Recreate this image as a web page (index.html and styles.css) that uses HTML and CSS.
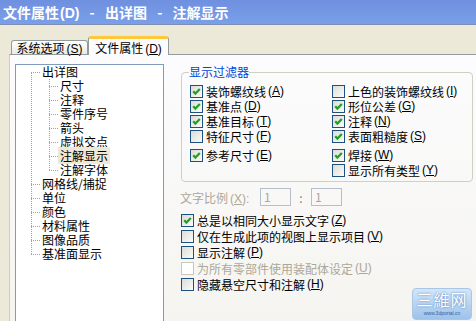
FILE: index.html
```html
<!DOCTYPE html>
<html lang="zh-CN">
<head>
  <meta charset="UTF-8" />
  <title>文件属性 - 注解显示</title>
  <link rel="stylesheet" href="styles.css">
</head>
<body>
  <div class="titlebar">文件属性<span class="key">(D)</span> - 出详图 - 注解显示</div>

  <div class="tabs">
    <div class="tab">系统选项<span class="key">(<u>S</u>)</span></div>
    <div class="tab active">文件属性<span class="key">(<u>D</u>)</span></div>
  </div>

  <div class="panel">
    <div class="tree">
      <ul class="root">
        <li><span>出详图</span>
          <ul class="sub">
            <li><span>尺寸</span></li>
            <li><span>注释</span></li>
            <li><span>零件序号</span></li>
            <li><span>箭头</span></li>
            <li><span>虚拟交点</span></li>
            <li><span class="sel">注解显示</span></li>
            <li><span>注解字体</span></li>
          </ul>
        </li>
        <li><span>网格线/捕捉</span></li>
        <li><span>单位</span></li>
        <li><span>颜色</span></li>
        <li><span>材料属性</span></li>
        <li><span>图像品质</span></li>
        <li><span>基准面显示</span></li>
      </ul>
    </div>

    <div class="options">
      <fieldset class="filter">
        <legend>显示过滤器</legend>
        <div class="grid">
          <label class="check"><span class="cb on"><svg viewBox="0 0 11 11"><polyline points="2.2,5.2 4.4,7.6 8.8,3"/></svg></span>装饰螺纹线<span class="key">(<u>A</u>)</span></label>
          <label class="check"><span class="cb"></span>上色的装饰螺纹线<span class="key">(<u>I</u>)</span></label>
          <label class="check"><span class="cb on"><svg viewBox="0 0 11 11"><polyline points="2.2,5.2 4.4,7.6 8.8,3"/></svg></span>基准点<span class="key">(<u>D</u>)</span></label>
          <label class="check"><span class="cb on"><svg viewBox="0 0 11 11"><polyline points="2.2,5.2 4.4,7.6 8.8,3"/></svg></span>形位公差<span class="key">(<u>G</u>)</span></label>
          <label class="check"><span class="cb on"><svg viewBox="0 0 11 11"><polyline points="2.2,5.2 4.4,7.6 8.8,3"/></svg></span>基准目标<span class="key">(<u>T</u>)</span></label>
          <label class="check"><span class="cb on"><svg viewBox="0 0 11 11"><polyline points="2.2,5.2 4.4,7.6 8.8,3"/></svg></span>注释<span class="key">(<u>N</u>)</span></label>
          <label class="check"><span class="cb"></span>特征尺寸<span class="key">(<u>F</u>)</span></label>
          <label class="check"><span class="cb on"><svg viewBox="0 0 11 11"><polyline points="2.2,5.2 4.4,7.6 8.8,3"/></svg></span>表面粗糙度<span class="key">(<u>S</u>)</span></label>
          <label class="check lower"><span class="cb on"><svg viewBox="0 0 11 11"><polyline points="2.2,5.2 4.4,7.6 8.8,3"/></svg></span>参考尺寸<span class="key">(<u>E</u>)</span></label>
          <label class="check lower"><span class="cb on"><svg viewBox="0 0 11 11"><polyline points="2.2,5.2 4.4,7.6 8.8,3"/></svg></span>焊接<span class="key">(<u>W</u>)</span></label>
          <div></div>
          <label class="check"><span class="cb"></span>显示所有类型<span class="key">(<u>Y</u>)</span></label>
        </div>
      </fieldset>

      <div class="scale">
        <span class="scale-label">文字比例<span class="key">(<u>X</u>):</span></span>
        <span class="box">1</span>
        <span class="sep">:</span>
        <span class="box">1</span>
      </div>

      <div class="checks">
        <label class="check"><span class="cb on"><svg viewBox="0 0 11 11"><polyline points="2.2,5.2 4.4,7.6 8.8,3"/></svg></span>总是以相同大小显示文字<span class="key">(<u>Z</u>)</span></label>
        <label class="check"><span class="cb"></span>仅在生成此项的视图上显示项目<span class="key">(<u>V</u>)</span></label>
        <label class="check"><span class="cb"></span>显示注解<span class="key">(<u>P</u>)</span></label>
        <label class="check disabled"><span class="cb"></span>为所有零部件使用装配体设定<span class="key">(<u>U</u>)</span></label>
        <label class="check"><span class="cb"></span>隐藏悬空尺寸和注解<span class="key">(<u>H</u>)</span></label>
      </div>
    </div>
  </div>

  <div class="watermark">
    <div class="wm-big">三維网</div>
    <div class="wm-small">www.3dportal.cn</div>
  </div>
</body>
</html>
```

FILE: styles.css
```css
body {
  margin: 0;
  width: 476px;
  height: 321px;
  overflow: hidden;
  position: relative;
  background: #ece9d8;
  font-family: "Noto Sans CJK SC", "Liberation Sans", sans-serif;
  font-size: 12px;
  color: #000;
}
u {
  text-decoration: underline;
}
.key {
  margin-left: 2px;
  font-family: "Liberation Sans", sans-serif;
}
.titlebar {
  height: 24px;
  line-height: 24px;
  padding-left: 3px;
  border-bottom: 1px solid #7f8fb0;
  background: linear-gradient(#6f8fdf, #7aa0ea);
  color: #fff;
  font-size: 14px;
  font-weight: bold;
  word-spacing: 7px;
  white-space: nowrap;
}
.titlebar .key {
  margin-left: 1px;
}
.tabs {
  display: flex;
  align-items: flex-end;
  height: 19px;
  margin-top: 11px;
  margin-bottom: -1px;
  padding-left: 11px;
  position: relative;
  z-index: 1;
}
.tab {
  width: 75px;
  height: 13px;
  line-height: 13px;
  margin-bottom: 1px;
  border: 1px solid #919b9c;
  border-bottom: none;
  border-radius: 3px 3px 0 0;
  background: linear-gradient(#ffffff, #eceae3);
  text-align: center;
  white-space: nowrap;
}
.tab.active {
  width: 79px;
  height: 16px;
  line-height: 18px;
  margin-bottom: 0;
  border-top: 3px solid #ffc83c;
  background: #fcfcfe;
}
.panel {
  display: flex;
  align-items: flex-start;
  height: 300px;
  margin-left: 9px;
  padding: 9px 0 0 5px;
  border-top: 1px solid #919b9c;
  border-left: 1px solid #cfcdc2;
  background: linear-gradient(#fcfcfe, #f4f3ee);
}
.tree {
  flex: none;
  width: 147px;
  height: 270px;
  border: 1px solid #7f9db9;
  background: #fff;
}
.tree ul {
  list-style: none;
  margin: 0;
  padding: 0;
  position: relative;
}
.tree ul::before {
  content: "";
  position: absolute;
  left: 0;
  top: 7px;
  bottom: 7px;
  border-left: 1px dotted #a0a0a0;
}
.tree .root {
  margin-left: 15px;
}
.tree .sub {
  margin-left: 7px;
}
.tree .sub::before {
  top: 0;
}
.tree li {
  position: relative;
  padding-left: 11px;
  line-height: 14px;
  white-space: nowrap;
}
.tree li::before {
  content: "";
  position: absolute;
  left: 0;
  top: 7px;
  width: 9px;
  border-top: 1px dotted #a0a0a0;
}
.tree .sel {
  margin-left: -2px;
  padding: 0 2px;
  background: #ece9d8;
}
.options {
  flex: none;
  width: 292px;
  margin-left: 17px;
  padding-top: 1px;
}
.filter {
  margin: 0;
  padding: 6px 0 4px 8px;
  border: 1px solid #d0d0bf;
  border-radius: 4px;
}
.filter legend {
  margin-left: -1px;
  padding: 0;
  line-height: 14px;
  color: #0046d5;
}
.grid {
  display: grid;
  grid-template-columns: 142px 1fr;
  row-gap: 2px;
}
.check {
  display: flex;
  align-items: center;
  gap: 3px;
  height: 13px;
  line-height: 13px;
  white-space: nowrap;
}
.check .key {
  margin-left: -1px;
}
.check.lower {
  margin-top: 4px;
}
.cb {
  flex: none;
  width: 11px;
  height: 11px;
  border: 1px solid #1c5180;
  background: linear-gradient(135deg, #dcdcd7, #fbfbf9);
}
.cb svg {
  display: block;
  width: 11px;
  height: 11px;
}
.cb polyline {
  fill: none;
  stroke: #21a121;
  stroke-width: 2.2;
}
.check.disabled {
  color: #aca899;
}
.check.disabled .cb {
  border-color: #cac8bb;
  background: #fff;
}
.scale {
  display: flex;
  align-items: center;
  height: 18px;
  margin-top: 6px;
  color: #aca899;
}
.scale-label {
  width: 80px;
  margin-left: -1px;
  white-space: nowrap;
}
.box {
  width: 26px;
  height: 16px;
  line-height: 16px;
  padding-left: 3px;
  border: 1px solid #b6bec9;
}
.sep {
  width: 20px;
  text-align: center;
  color: #808080;
}
.checks {
  display: flex;
  flex-direction: column;
  gap: 3px;
  margin-top: 8px;
}
.watermark {
  position: absolute;
  left: 412px;
  top: 288px;
  width: 58px;
  height: 30px;
  border: 1px solid #aac6e6;
  border-radius: 4px;
  background: linear-gradient(#d4e6f8, #9ec2ea);
  text-align: center;
  overflow: hidden;
}
.wm-big {
  font-size: 16px;
  line-height: 21px;
  letter-spacing: 1px;
  color: #fff;
  text-shadow: 0 0 2px #3d6fb8;
}
.wm-small {
  font-family: "Liberation Sans", sans-serif;
  font-size: 5px;
  line-height: 6px;
  color: #3060a8;
}
```
